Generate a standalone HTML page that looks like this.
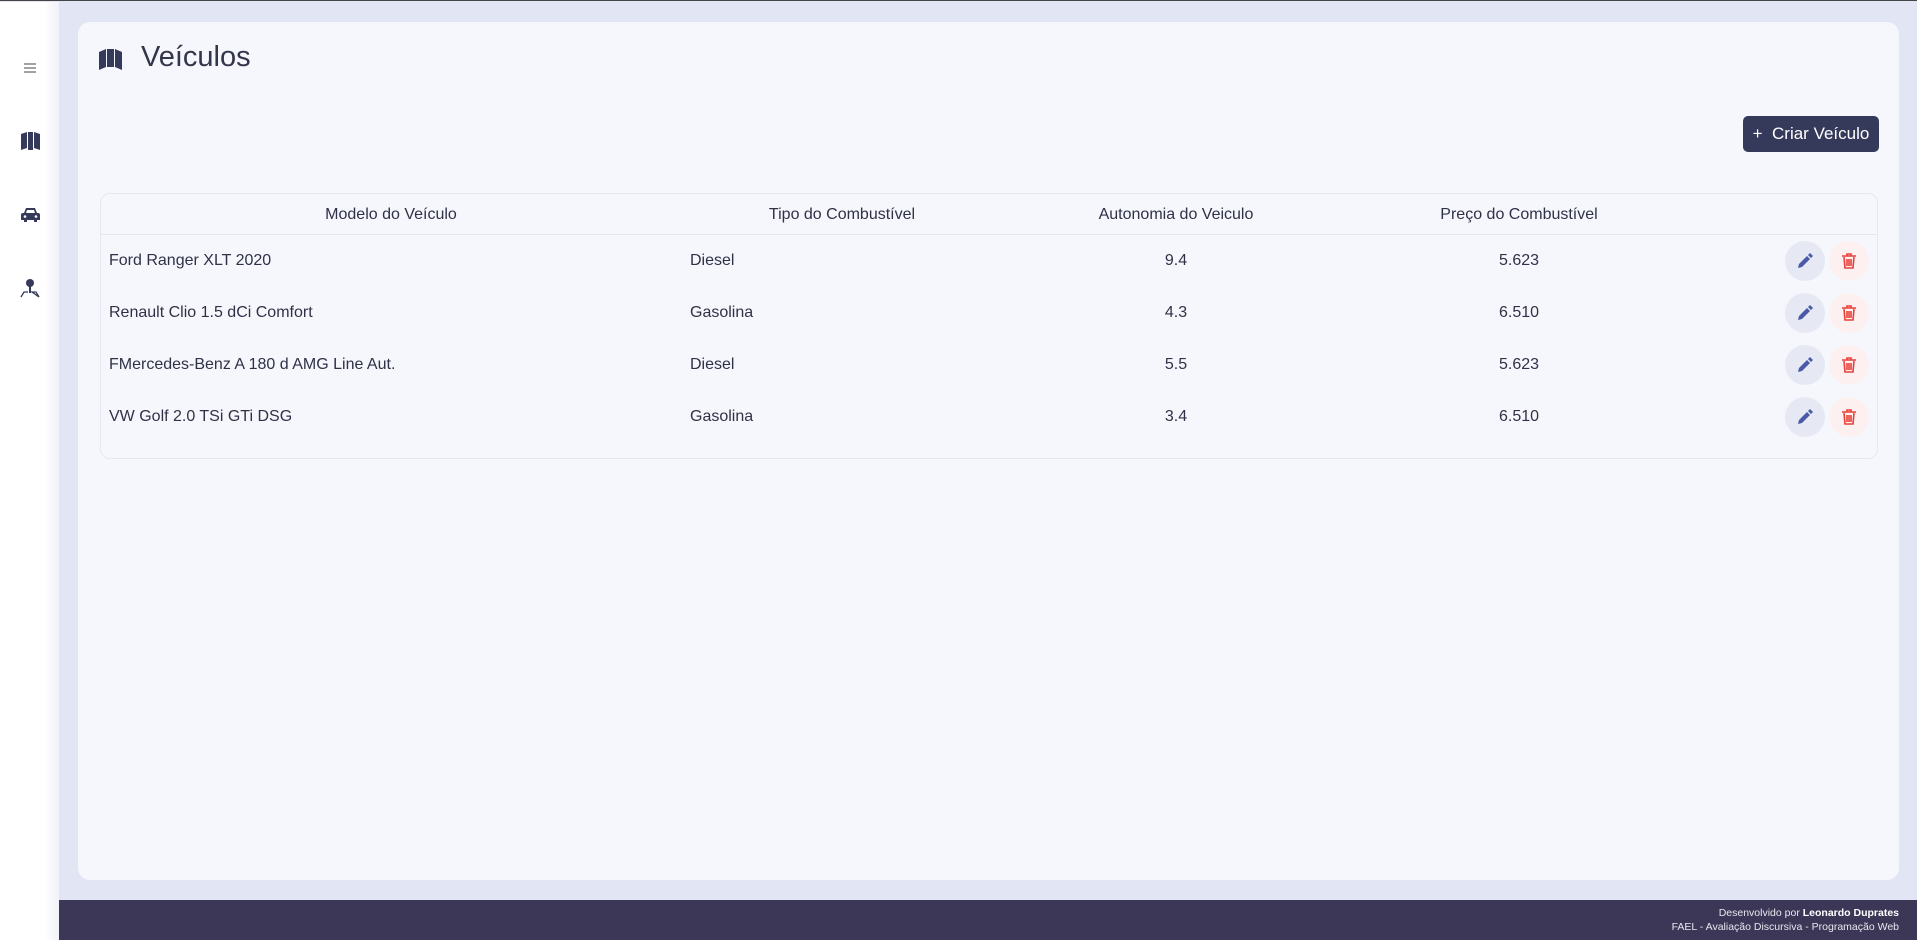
<!DOCTYPE html>
<html><head><meta charset="utf-8"><style>
*{box-sizing:border-box;margin:0;padding:0}
body{width:1917px;height:939px;overflow:hidden;background:#e2e5f4;font-family:"Liberation Sans","Noto Sans CJK JP",sans-serif;color:#2f3147;position:relative;border-top:1px solid #444}
.side{position:absolute;left:0;top:1px;width:59px;height:938px;background:linear-gradient(90deg,#fff 75%,#f1f2f9)}
.side .ic{position:absolute;left:19px;width:22px;height:22px;display:flex;align-items:center;justify-content:center}
.card{position:absolute;left:78px;top:21px;width:1821px;height:858px;background:#f6f7fc;border-radius:12px}
h1{position:absolute;left:141px;top:40px;font-weight:300;font-size:29px;color:#33354a}
.btn{position:absolute;left:1743px;top:115px;width:136px;height:36px;background:#363a5a;border-radius:5px;color:#fff;font-size:17px;line-height:36px;text-align:center}
.tbl{position:absolute;left:100px;top:192px;width:1778px;height:266px;border:1px solid #e6e7f0;border-radius:10px}
.hdr{height:41px;border-bottom:1px solid #e6e7f0;position:relative}
.row{height:52px;position:relative}
.c{position:absolute;top:0;line-height:inherit;font-size:16px;white-space:nowrap}
.hdr .c{line-height:41px;transform:translateX(-50%)}
.row .c{line-height:52px}
.ctr{transform:translateX(-50%)}
.b{position:absolute;top:6px;width:40px;height:40px;border-radius:50%;display:flex;align-items:center;justify-content:center}
.e{left:1684px;background:#e6e9f3}.d{left:1728px;background:#fcf1f0}
.foot{position:absolute;left:59px;top:899px;right:0;height:40px;background:#3d3757;color:#e8e7f0;font-size:10.5px;text-align:right;padding:6px 18px 0 0;line-height:14px}
</style></head><body>
<div class="side">
<div class="ic" style="top:55px"><svg width="14" height="12"><path d="M1 2h12M1 6h12M1 10h12" stroke="#444" stroke-width="1"/></svg></div>
<div class="ic" style="top:128px"><svg width="19" height="18"><path d="M0 2l6-2v16l-6 2zM7 0h5v18H7zM13 0l6 2v16l-6-2z" fill="#363a5a"/></svg></div>
<div class="ic" style="top:202px"><svg width="19" height="16"><path d="M3 6l2-5h9l2 5h1a2 2 0 0 1 2 2v5h-3v2h-3v-2H6v2H3v-2H0V8a2 2 0 0 1 2-2zM6 3l-1 3h9l-1-3z" fill="#363a5a"/><circle cx="4" cy="9.5" r="1.3" fill="#fff"/><circle cx="15" cy="9.5" r="1.3" fill="#fff"/></svg></div>
<div class="ic" style="top:275px"><svg width="20" height="20"><circle cx="10" cy="5" r="4" fill="#363a5a"/><path d="M10 8v7" stroke="#363a5a" stroke-width="2"/><path d="M1 19l3-5h4M12 14h4l3 5z" fill="none" stroke="#363a5a" stroke-width="1.3"/></svg></div>
</div>
<div class="card">
<svg style="position:absolute;left:21px;top:27px" width="23" height="21"><path d="M0 3l7-3v18l-7 3zM8 0h7v18H8zM16 0l7 3v18l-7-3z" fill="#363a5a"/></svg>
</div>
<h1>Veículos</h1>
<div class="btn">+&nbsp; Criar Veículo</div>
<div class="tbl">
<div class="hdr"><span class="c" style="left:290px">Modelo do Veículo</span><span class="c" style="left:741px">Tipo do Combustível</span><span class="c" style="left:1075px">Autonomia do Veiculo</span><span class="c" style="left:1418px">Preço do Combustível</span></div>
<div class="row"><span class="c" style="left:8px">Ford Ranger XLT 2020</span><span class="c" style="left:589px">Diesel</span><span class="c ctr" style="left:1075px">9.4</span><span class="c ctr" style="left:1418px">5.623</span><div class="b e"><svg width="16" height="16"><path d="M1 15l1-4 8-8 3 3-8 8zM11 2l2-2 3 3-2 2z" fill="#4a5aa8"/></svg></div><div class="b d"><svg width="14" height="16"><path d="M0 3h14M5 3V1h4v2M2 4l1 11h8l1-11M5 6v7M7 6v7M9 6v7" fill="none" stroke="#e8413a" stroke-width="1.6"/></svg></div></div>
<div class="row"><span class="c" style="left:8px">Renault Clio 1.5 dCi Comfort</span><span class="c" style="left:589px">Gasolina</span><span class="c ctr" style="left:1075px">4.3</span><span class="c ctr" style="left:1418px">6.510</span><div class="b e"><svg width="16" height="16"><path d="M1 15l1-4 8-8 3 3-8 8zM11 2l2-2 3 3-2 2z" fill="#4a5aa8"/></svg></div><div class="b d"><svg width="14" height="16"><path d="M0 3h14M5 3V1h4v2M2 4l1 11h8l1-11M5 6v7M7 6v7M9 6v7" fill="none" stroke="#e8413a" stroke-width="1.6"/></svg></div></div>
<div class="row"><span class="c" style="left:8px">FMercedes-Benz A 180 d AMG Line Aut.</span><span class="c" style="left:589px">Diesel</span><span class="c ctr" style="left:1075px">5.5</span><span class="c ctr" style="left:1418px">5.623</span><div class="b e"><svg width="16" height="16"><path d="M1 15l1-4 8-8 3 3-8 8zM11 2l2-2 3 3-2 2z" fill="#4a5aa8"/></svg></div><div class="b d"><svg width="14" height="16"><path d="M0 3h14M5 3V1h4v2M2 4l1 11h8l1-11M5 6v7M7 6v7M9 6v7" fill="none" stroke="#e8413a" stroke-width="1.6"/></svg></div></div>
<div class="row"><span class="c" style="left:8px">VW Golf 2.0 TSi GTi DSG</span><span class="c" style="left:589px">Gasolina</span><span class="c ctr" style="left:1075px">3.4</span><span class="c ctr" style="left:1418px">6.510</span><div class="b e"><svg width="16" height="16"><path d="M1 15l1-4 8-8 3 3-8 8zM11 2l2-2 3 3-2 2z" fill="#4a5aa8"/></svg></div><div class="b d"><svg width="14" height="16"><path d="M0 3h14M5 3V1h4v2M2 4l1 11h8l1-11M5 6v7M7 6v7M9 6v7" fill="none" stroke="#e8413a" stroke-width="1.6"/></svg></div></div>
</div>
<div class="foot">Desenvolvido por <b style="color:#fff">Leonardo Duprates</b><br>FAEL - Avaliação Discursiva - Programação Web</div>
</body></html>
